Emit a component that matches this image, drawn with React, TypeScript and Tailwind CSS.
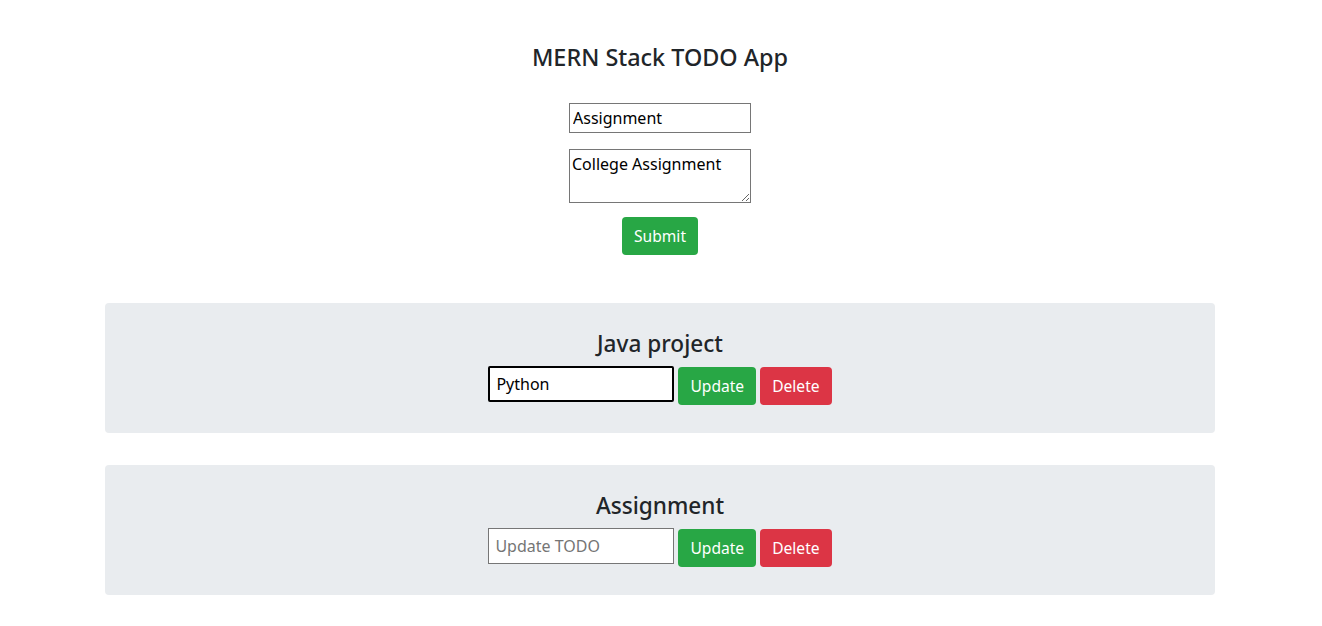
import React, { useState } from 'react';

interface Todo {
  id: number;
  title: string;
  draft: string;
  focused?: boolean;
}

const TodoCard: React.FC<{ todo: Todo }> = ({ todo }) => {
  const [value, setValue] = useState(todo.draft);

  return (
    <div className="w-[1110px] bg-[#e9ecef] rounded-[4px] pt-[27px] pb-[28px] flex flex-col items-center">
      <h4 className="text-[22.6px] leading-[28px] font-medium text-[#212529]">{todo.title}</h4>
      <div className="mt-[8px] flex items-start gap-[4px]">
        <input
          value={value}
          onChange={(e) => setValue(e.target.value)}
          placeholder="Update TODO"
          className={`w-[186px] h-[36px] px-[6px] text-[16px] text-black bg-white placeholder-[#757575] outline-none ${
            todo.focused ? 'border-2 border-black rounded-[2px]' : 'border border-[#767676]'
          }`}
        />
        <button className="mt-[1px] h-[38px] px-[12px] pt-[2px] rounded-[4px] bg-[#28a745] text-white text-[15.6px]">Update</button>
        <button className="mt-[1px] h-[38px] px-[12px] pt-[2px] rounded-[4px] bg-[#dc3545] text-white text-[15.6px]">Delete</button>
      </div>
    </div>
  );
};

export default function App() {
  const [title, setTitle] = useState('Assignment');
  const [desc, setDesc] = useState('College Assignment');

  const todos: Todo[] = [
    { id: 1, title: 'Java project', draft: 'Python', focused: true },
    { id: 2, title: 'Assignment', draft: '' },
  ];

  return (
    <div className="min-h-screen bg-white flex flex-col items-center pt-[43px] pr-[2px] font-['Segoe_UI','Noto_Sans',sans-serif] text-[#212529]">
      <h3 className="text-[23.4px] leading-[29px] font-medium">MERN Stack TODO App</h3>

      <form className="mt-[31px] flex flex-col items-center" onSubmit={(e) => e.preventDefault()}>
        <input
          value={title}
          onChange={(e) => setTitle(e.target.value)}
          className="w-[182px] h-[30px] px-[3px] border border-[#767676] text-[16px] text-black outline-none"
        />
        <textarea
          value={desc}
          onChange={(e) => setDesc(e.target.value)}
          className="mt-[16px] w-[182px] h-[54px] px-[2px] pt-[4px] border border-[#767676] text-[16px] leading-[20px] text-black outline-none"
        />
        <button className="mt-[14px] h-[38px] px-[12px] pt-[2px] rounded-[4px] bg-[#28a745] text-white text-[15.6px]">Submit</button>
      </form>

      <div className="mt-[48px] flex flex-col items-center gap-[32px]">
        {todos.map((t) => (
          <TodoCard key={t.id} todo={t} />
        ))}
      </div>
    </div>
  );
}
